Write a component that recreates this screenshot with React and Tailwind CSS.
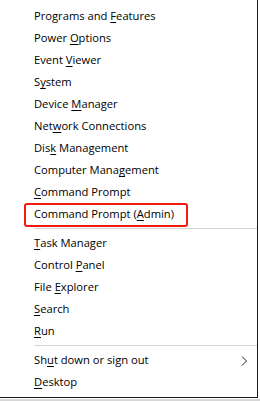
import React from 'react';

const groups = [
  [
    ['Programs and ', 'F', 'eatures'],
    ['Power ', 'O', 'ptions'],
    ['Event ', 'V', 'iewer'],
    ['S', 'y', 'stem'],
    ['Device ', 'M', 'anager'],
    ['Net', 'w', 'ork Connections'],
    ['Dis', 'k', ' Management'],
    ['Computer Mana', 'g', 'ement'],
    ['', 'C', 'ommand Prompt'],
    ['Command Prompt (', 'A', 'dmin)', 'highlight'],
  ],
  [
    ['', 'T', 'ask Manager'],
    ['Control ', 'P', 'anel'],
    ['File ', 'E', 'xplorer'],
    ['', 'S', 'earch'],
    ['', 'R', 'un'],
  ],
  [
    ['Sh', 'u', 't down or sign out', 'submenu'],
    ['', 'D', 'esktop'],
  ],
];

const MenuItem = ({ item }) => {
  const [pre, key, post, flag] = item;
  return (
    <div className="relative flex h-[22px] items-center pl-[34px] pr-3">
      {flag === 'highlight' && (
        <div className="pointer-events-none absolute left-[24px] top-0 h-[24px] w-[164px] rounded-[3px] border-2 border-[#f01c14]" />
      )}
      <span>
        {pre}
        <u className="underline-offset-[2px]">{key}</u>
        {post}
      </span>
      {flag === 'submenu' && (
        <svg className="absolute left-[241px] top-[7px]" width="7" height="10" viewBox="0 0 7 10">
          <path d="M1 0.5 L5.5 5 L1 9.5" fill="none" stroke="#222" strokeWidth="1" />
        </svg>
      )}
    </div>
  );
};

const App = () => {
  return (
    <div className="h-[402px] w-[260px] bg-white text-[11.2px] leading-none text-black font-['Open_Sans',sans-serif]">
      <div className="h-[398px] w-[258px] border-b border-r border-[#1b1b1b] pt-[5px]">
        {groups.map((group, gi) => (
          <div key={gi}>
            {gi > 0 && <div className="my-[3px] ml-[34px] h-px bg-[#d4d4d4]" />}
            {group.map((item, i) => (
              <MenuItem key={i} item={item} />
            ))}
          </div>
        ))}
      </div>
      <div className="mt-[1px] h-[2px] w-full bg-[#d8d8d8]" />
    </div>
  );
};

export default App;
